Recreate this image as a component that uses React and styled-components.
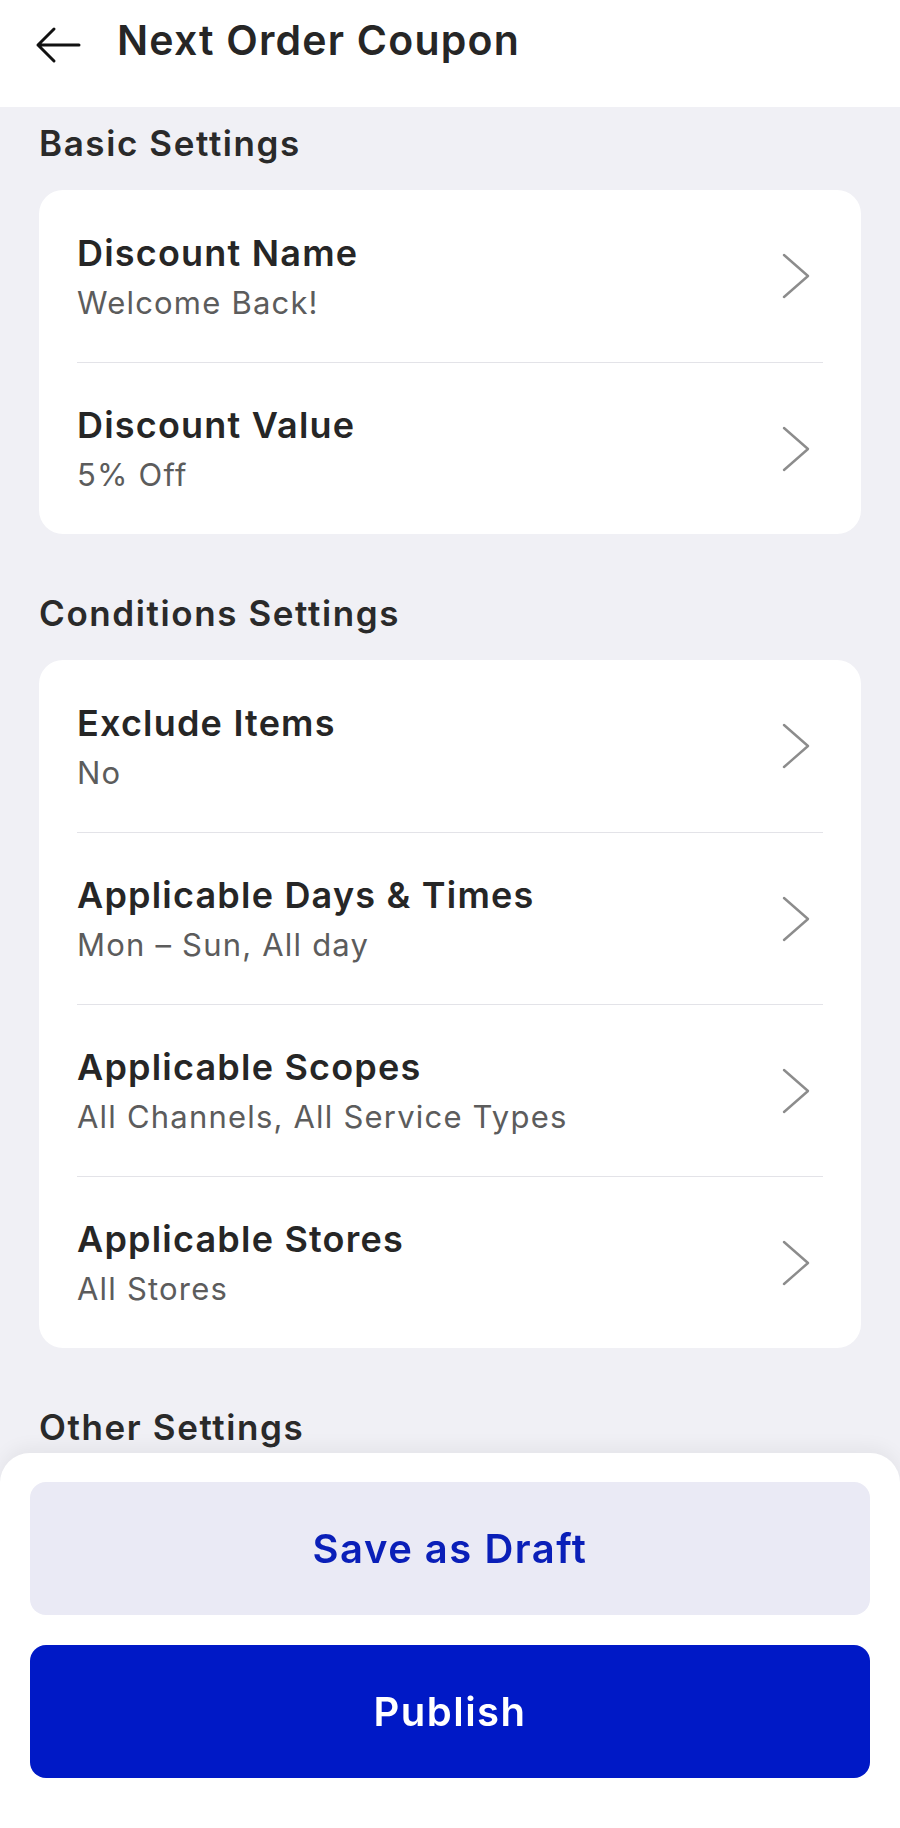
import React from "react";
import styled, { createGlobalStyle } from "styled-components";

const GlobalStyle = createGlobalStyle`
  * { box-sizing: border-box; }
  html, body {
    margin: 0;
    padding: 0;
    background: #f0f0f5;
    font-family: Inter, "Noto Sans", sans-serif;
    -webkit-font-smoothing: antialiased;
  }
`;

const Page = styled.div`
  min-height: 1828px;
  display: flex;
  flex-direction: column;
  padding-bottom: 380px;
`;

const Header = styled.header`
  height: 107px;
  background: #fff;
  display: flex;
  align-items: flex-start;
  padding: 14px 0 0 35px;
  gap: 36px;
`;

const BackButton = styled.button`
  border: none;
  background: none;
  padding: 0;
  margin-top: 12px;
  width: 46px;
  height: 38px;
  display: flex;
  cursor: pointer;
`;

const Title = styled.h1`
  margin: 0;
  font-size: 41px;
  line-height: 52px;
  font-weight: 600;
  color: #262626;
  letter-spacing: 1.2px;
`;

const Section = styled.section`
  display: flex;
  flex-direction: column;
  padding: 0 39px;
  & + & {
    margin-top: 43px;
  }
`;

const SectionTitle = styled.h2`
  margin: 0;
  height: 83px;
  padding-top: 14px;
  font-size: 35px;
  line-height: 44px;
  font-weight: 600;
  color: #2a2a2a;
  letter-spacing: 1.6px;
`;

const Card = styled.div`
  background: #fff;
  border-radius: 24px;
  display: flex;
  flex-direction: column;
`;

const Row = styled.div`
  height: 172px;
  margin: 0 38px;
  display: flex;
  align-items: center;
  justify-content: space-between;
  border-top: ${(p) => (p.$first ? "none" : "1px solid #e3e3e8")};
`;

const RowText = styled.div`
  display: flex;
  flex-direction: column;
  gap: 9px;
`;

const RowTitle = styled.div`
  font-size: 36px;
  line-height: 44px;
  font-weight: 600;
  color: #262626;
  letter-spacing: 1.2px;
`;

const RowValue = styled.div`
  font-size: 31px;
  line-height: 38px;
  font-weight: 400;
  color: #5c5c5c;
  letter-spacing: 1.2px;
`;

const Chevron = styled.svg`
  width: 30px;
  height: 48px;
  margin-right: 12px;
  flex-shrink: 0;
`;

const Sheet = styled.div`
  position: fixed;
  left: 0;
  right: 0;
  bottom: 0;
  height: 375px;
  background: #fff;
  border-radius: 30px 30px 0 0;
  box-shadow: 0 -6px 18px rgba(0, 0, 0, 0.05);
  padding: 29px 30px 50px;
  display: flex;
  flex-direction: column;
  gap: 30px;
`;

const ActionButton = styled.button`
  height: 133px;
  border: none;
  border-radius: 16px;
  font-family: Inter, "Noto Sans", sans-serif;
  font-size: 40px;
  font-weight: 600;
  letter-spacing: 1.5px;
  background: ${(p) => (p.$primary ? "#0019c6" : "#eaeaf5")};
  color: ${(p) => (p.$primary ? "#ffffff" : "#0a1fb8")};
  cursor: pointer;
`;

const sections = [
  {
    title: "Basic Settings",
    rows: [
      { label: "Discount Name", value: "Welcome Back!" },
      { label: "Discount Value", value: "5% Off" },
    ],
  },
  {
    title: "Conditions Settings",
    rows: [
      { label: "Exclude Items", value: "No" },
      { label: "Applicable Days & Times", value: "Mon – Sun, All day" },
      { label: "Applicable Scopes", value: "All Channels, All Service Types" },
      { label: "Applicable Stores", value: "All Stores" },
    ],
  },
  {
    title: "Other Settings",
    rows: [],
  },
];

export default function App() {
  return (
    <>
      <GlobalStyle />
      <Page>
        <Header>
          <BackButton aria-label="Back">
            <svg width="46" height="38" viewBox="0 0 46 38" fill="none">
              <path
                d="M44 19H3M19 3L3 19L19 35"
                stroke="#111"
                strokeWidth="3"
                strokeLinecap="round"
                strokeLinejoin="round"
              />
            </svg>
          </BackButton>
          <Title>Next Order Coupon</Title>
        </Header>
        {sections.map((s) => (
          <Section key={s.title}>
            <SectionTitle>{s.title}</SectionTitle>
            {s.rows.length > 0 && (
              <Card>
                {s.rows.map((r, i) => (
                  <Row key={r.label} $first={i === 0}>
                    <RowText>
                      <RowTitle>{r.label}</RowTitle>
                      <RowValue>{r.value}</RowValue>
                    </RowText>
                    <Chevron viewBox="0 0 30 48" fill="none">
                      <path
                        d="M3 3L27 24L3 45"
                        stroke="#8c8c8c"
                        strokeWidth="2.4"
                        strokeLinecap="round"
                        strokeLinejoin="round"
                      />
                    </Chevron>
                  </Row>
                ))}
              </Card>
            )}
          </Section>
        ))}
      </Page>
      <Sheet>
        <ActionButton>Save as Draft</ActionButton>
        <ActionButton $primary>Publish</ActionButton>
      </Sheet>
    </>
  );
}
